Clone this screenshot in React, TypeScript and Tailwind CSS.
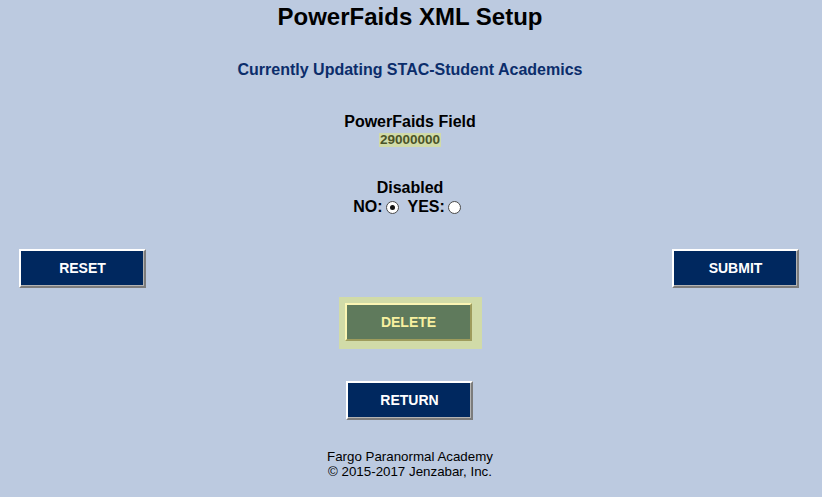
import React from "react";

function Radio({ checked, className = "" }: { checked?: boolean; className?: string }) {
  return (
    <span
      className={
        "inline-flex h-[13px] w-[13px] items-center justify-center rounded-full border border-[#4a4a4a] bg-white " +
        className
      }
    >
      {checked && <span className="h-[5px] w-[5px] rounded-full bg-[#111]" />}
    </span>
  );
}

const navyBtn =
  "w-[127px] h-[39px] bg-[#00285f] text-white text-[14px] font-bold border-2 border-solid border-t-white border-l-white border-r-[#7c7c7c] border-b-[#7c7c7c] shadow-[inset_-1px_-1px_0_#b4b4b4]";

export default function App() {
  return (
    <div
      className="min-h-[497px] w-full bg-[#bccae0] text-black"
      style={{ fontFamily: '"Liberation Sans", Arial, sans-serif' }}
    >
      <div className="flex flex-col items-center pt-[3px] pr-[2px]">
        <h1 className="text-[24px] font-bold leading-[28px]">PowerFaids XML Setup</h1>

        <p className="mt-[30px] text-[16px] font-bold leading-[18px] text-[#0b2d6b]">
          Currently Updating STAC-Student Academics
        </p>

        <p className="mt-[34px] text-[16px] font-bold leading-[18px]">PowerFaids Field</p>
        <span className="mt-[2px] bg-[#d1dba8] px-[1px] text-[13.5px] font-bold leading-[14px] text-[#4b5428]">
          29000000
        </span>

        <p className="mt-[32px] text-[16px] font-bold leading-[18px]">Disabled</p>
        <p className="mt-[1px] flex items-center pr-[6px] text-[16px] font-bold leading-[18px]">
          <span>NO:</span>
          <Radio checked className="ml-[4px]" />
          <span className="ml-[8px]">YES:</span>
          <Radio className="ml-[3px]" />
        </p>
      </div>

      <div className="mt-[33px] flex justify-between pl-[19px] pr-[23px]">
        <button className={navyBtn}>RESET</button>
        <button className={navyBtn}>SUBMIT</button>
      </div>

      <div className="mt-[9px] flex justify-center pr-[1px]">
        <div className="bg-[#d1dba8] pl-[6px] pr-[10px] pt-[6px] pb-[8px]">
          <button className="h-[38px] w-[127px] border-2 border-solid border-t-[#fbf5b4] border-l-[#fbf5b4] border-r-[#9e9c5c] border-b-[#9e9c5c] bg-[#5f7a5c] text-[14px] font-bold text-[#f7f0a0]">
            DELETE
          </button>
        </div>
      </div>

      <div className="mt-[32px] flex justify-center pr-[3px]">
        <button className={navyBtn}>RETURN</button>
      </div>

      <div className="mt-[29px] flex flex-col items-center pr-[2px] text-[13.33px] leading-[15px]">
        <span>Fargo Paranormal Academy</span>
        <span>© 2015-2017 Jenzabar, Inc.</span>
      </div>
    </div>
  );
}
